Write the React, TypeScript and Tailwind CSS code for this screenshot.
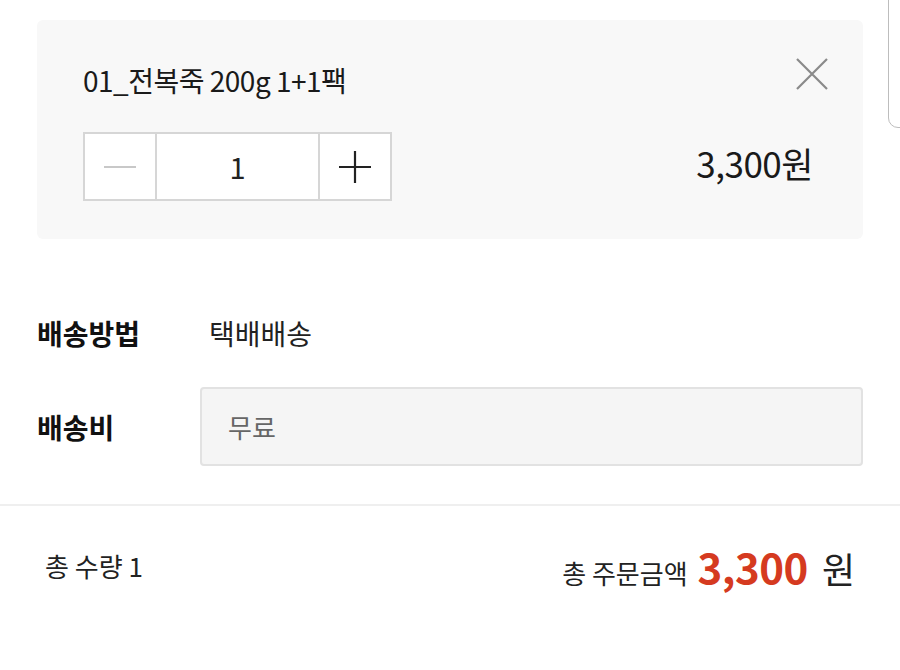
const FONT = "font-['Noto_Sans_CJK_KR','Noto_Sans',sans-serif]"

function CloseIcon() {
  return (
    <svg width="34" height="34" viewBox="0 0 34 34" className="text-[#8a8a8a]">
      <path d="M2 2 L32 32 M32 2 L2 32" stroke="currentColor" strokeWidth="2.2" fill="none" />
    </svg>
  )
}

function Stepper() {
  return (
    <div className="flex h-[69px] w-[309px] border-2 border-[#d6d6d6] bg-white">
      <button className="flex w-[72px] items-center justify-center border-r-2 border-[#d6d6d6]">
        <span className="block h-[2px] w-[32px] bg-[#c8c8c8]" />
      </button>
      <div className="flex flex-1 items-center justify-center text-[29px] text-[#222]">1</div>
      <button className="flex w-[72px] items-center justify-center border-l-2 border-[#d6d6d6]">
        <svg width="34" height="34" viewBox="0 0 34 34">
          <path d="M17 1 V33 M1 17 H33" stroke="#222" strokeWidth="2.2" />
        </svg>
      </button>
    </div>
  )
}

export default function App() {
  return (
    <div className={`relative h-[670px] w-[900px] overflow-hidden bg-white ${FONT}`}>
      {/* edge of the floating panel behind */}
      <div className="absolute right-[-20px] top-[-10px] h-[138px] w-[32px] rounded-bl-[10px] border border-[#bdbdbd] bg-white" />

      <div className="px-[37px] pt-[20px]">
        {/* selected option card */}
        <div className="h-[219px] rounded-[6px] bg-[#f8f8f8] pl-[46px] pr-[34px] pt-[40px]">
          <div className="flex items-start justify-between">
            <p className="text-[28px] leading-[40px] tracking-[-0.5px] text-[#1a1a1a]">01_전복죽 200g 1+1팩</p>
            <div className="-mt-[3px]">
              <CloseIcon />
            </div>
          </div>
          <div className="mt-[32px] flex items-center justify-between">
            <Stepper />
            <span className="-mt-[6px] pr-[16px] text-[35px] tracking-[-0.5px] text-[#1a1a1a]">3,300원</span>
          </div>
        </div>

        {/* shipping */}
        <div className="mt-[73px] flex items-center">
          <span className="w-[172px] text-[28px] font-bold text-[#111]">배송방법</span>
          <span className="text-[28px] text-[#222]">택배배송</span>
        </div>
        <div className="mt-[33px] flex items-center">
          <span className="w-[163px] text-[28px] font-bold text-[#111]">배송비</span>
          <div className="flex h-[79px] flex-1 items-center rounded-[4px] border-2 border-[#e2e2e2] bg-[#f5f5f5] px-[26px] text-[26px] text-[#666]">
            무료
          </div>
        </div>
      </div>

      <div className="mt-[38px] h-[2px] bg-[#efefef]" />

      {/* totals */}
      <div className="flex items-center justify-between pl-[45px] pr-[45px] pt-[28px]">
        <span className="text-[26px] text-[#222]">총 수량 1</span>
        <div className="flex items-baseline">
          <span className="text-[26px] text-[#222]">총 주문금액</span>
          <span className="ml-[10px] text-[42px] font-bold tracking-[-0.5px] text-[#d53a20]">3,300</span>
          <span className="ml-[14px] text-[36px] text-[#222]">원</span>
        </div>
      </div>
    </div>
  )
}
